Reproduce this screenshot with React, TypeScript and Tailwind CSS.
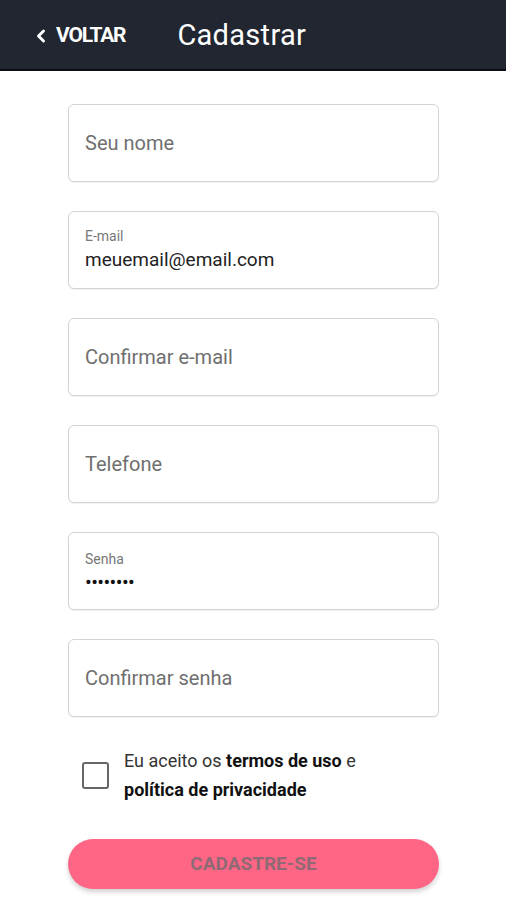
import { ChevronLeft } from 'lucide-react'

function Field({ label, value, placeholder, password }: { label?: string; value?: string; placeholder?: string; password?: boolean }) {
  return (
    <div className="h-[78px] w-full rounded-[6px] border border-[#d4d4d4] bg-white px-4 flex flex-col justify-center shadow-[0_1px_1px_rgba(0,0,0,0.06)]">
      {label ? (
        <>
          <span className="text-[14px] leading-[18px] text-[#777]">{label}</span>
          {password ? (
            <span className="mt-[4px] text-[20px] leading-[20px] tracking-[-0.6px] text-[#111]">{'••••••••'}</span>
          ) : (
            <span className="mt-[2px] text-[19px] leading-[26px] text-[#222]">{value}</span>
          )}
        </>
      ) : (
        <span className="text-[20px] leading-[26px] text-[#6f6f6f]">{placeholder}</span>
      )}
    </div>
  )
}

export default function App() {
  return (
    <div className="min-h-[900px] w-[506px] bg-white font-['Roboto',_'Noto_Sans',_sans-serif]">
      <header className="h-[71px] bg-[#212630] border-b-2 border-[#0c0e12] flex items-center pt-[2px]">
        <div className="flex items-center ml-[31px] text-white">
          <ChevronLeft size={20} strokeWidth={3.5} />
          <span className="ml-[5px] text-[21px] font-bold tracking-[-1.2px]">VOLTAR</span>
        </div>
        <h1 className="ml-[52px] text-[29px] text-white tracking-[0.3px]">Cadastrar</h1>
      </header>
      <main className="pl-[68px] pr-[67px] pt-[33px] flex flex-col gap-[29px]">
        <Field placeholder="Seu nome" />
        <Field label="E-mail" value="meuemail@email.com" />
        <Field placeholder="Confirmar e-mail" />
        <Field placeholder="Telefone" />
        <Field label="Senha" password />
        <Field placeholder="Confirmar senha" />
      </main>
      <div className="pl-[68px] pr-[67px]">
        <label className="mt-[29px] ml-[14px] flex items-center gap-[15px]">
          <span className="h-[27px] w-[27px] shrink-0 rounded-[3px] border-2 border-[#666] bg-white" />
          <span className="text-[18px] leading-[29px] text-[#333]">
            Eu aceito os <b className="font-bold text-[#111]">termos de uso</b> e<br />
            <b className="font-bold text-[#111]">política de privacidade</b>
          </span>
        </label>
        <button className="mt-[35px] h-[50px] w-full rounded-full bg-[#ff6584] text-[19px] font-bold text-[#8f6a74] shadow-[0_3px_5px_rgba(0,0,0,0.18)]">
          CADASTRE-SE
        </button>
      </div>
    </div>
  )
}
